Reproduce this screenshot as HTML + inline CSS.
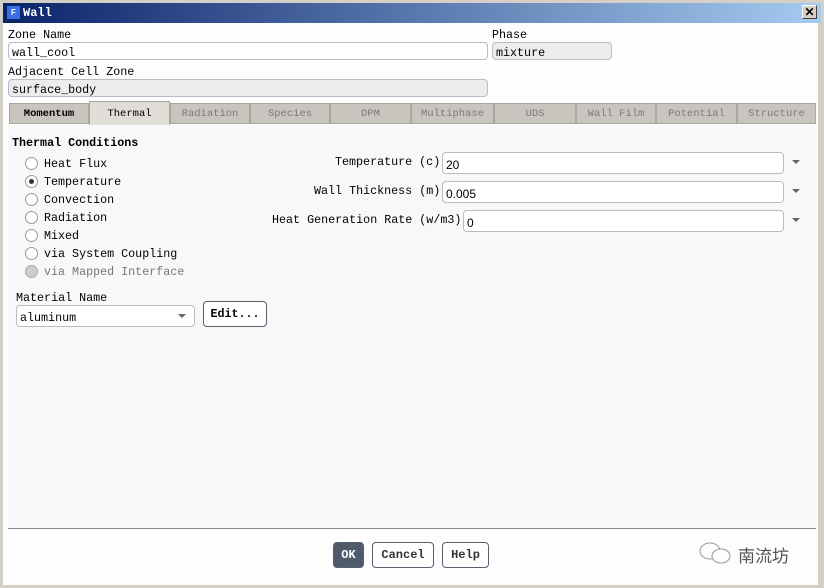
<!DOCTYPE html>
<html><head><style>
*{margin:0;padding:0;box-sizing:border-box}
body{width:824px;height:588px;background:#d4d0c8;font-family:"Liberation Mono","Noto Sans CJK SC",monospace;font-size:11.7px;color:#000;position:relative;overflow:hidden}
.a{position:absolute;white-space:nowrap}
.title{left:3px;top:3px;width:818px;height:20px;background:linear-gradient(90deg,#0a246a,#a6caf0)}
.win{left:3px;top:23px;width:815px;height:562px;background:#fdfdfd}
.inp{position:absolute;border:1px solid #b8bcc4;border-radius:4px;background:#fff;padding:2px 3px;line-height:14px;font-family:"Liberation Mono",monospace;font-size:11.7px}
.g{background:#ececec}
.tab{position:absolute;top:103px;height:21px;background:#c8c5bf;border:1px solid #aaa7a0;color:#7a7a7a;font-size:10.5px;text-align:center;line-height:21px}
.rad{position:absolute;left:25px;width:13px;height:13px;border:1px solid #9a9a9a;border-radius:50%;background:#fff}
.arr{position:absolute;left:792px;width:0;height:0;border-left:4px solid transparent;border-right:4px solid transparent;border-top:4px solid #666}
.btn{position:absolute;top:542px;height:26px;border:1px solid #56606e;border-radius:4px;font-weight:bold;font-size:12px;text-align:center;line-height:25px;color:#333}
</style></head><body>
<div class="a title"></div>
<div class="a" style="left:7px;top:6px;width:13px;height:13px;background:#3a6ee8;color:#fff;font-size:8px;font-weight:bold;text-align:center;line-height:13px;font-family:'Liberation Sans'">F</div>
<div class="a" style="left:23px;top:6px;color:#fff;font-weight:bold;font-size:12px">Wall</div>
<div class="a" style="left:802px;top:5px;width:15px;height:14px;background:#d4d0c8;border:1px solid #404040;border-top-color:#fff;border-left-color:#fff;text-align:center;line-height:12px;font-weight:bold;font-size:12px;font-family:'Liberation Sans'">✕</div>
<div class="a win"></div>
<div class="a" style="left:8px;top:28px">Zone Name</div>
<div class="inp" style="left:8px;top:42px;width:480px;height:18px;padding-top:3px">wall_cool</div>
<div class="a" style="left:492px;top:28px">Phase</div>
<div class="inp g" style="left:492px;top:42px;width:120px;height:18px;padding-top:3px">mixture</div>
<div class="a" style="left:8px;top:65px">Adjacent Cell Zone</div>
<div class="inp g" style="left:8px;top:79px;width:480px;height:18px;padding-top:3px">surface_body</div>
<div class="tab" style="left:9px;width:80px;color:#000;font-weight:bold">Momentum</div>
<div class="tab" style="left:89px;top:101px;height:24px;width:81px;background:#e0ddd7;color:#000;border-bottom:none;line-height:24px">Thermal</div>
<div class="tab" style="left:170px;width:80px">Radiation</div>
<div class="tab" style="left:250px;width:80px">Species</div>
<div class="tab" style="left:330px;width:81px">DPM</div>
<div class="tab" style="left:411px;width:83px">Multiphase</div>
<div class="tab" style="left:494px;width:82px">UDS</div>
<div class="tab" style="left:576px;width:80px">Wall Film</div>
<div class="tab" style="left:656px;width:81px">Potential</div>
<div class="tab" style="left:737px;width:79px">Structure</div>
<div class="a" style="left:8px;top:125px;width:808px;height:403px;background:#f8f8f8"></div>
<div class="a" style="left:8px;top:528px;width:808px;height:1px;background:#888"></div>
<div class="a" style="left:12px;top:136px;font-weight:bold">Thermal Conditions</div>
<div class="rad" style="top:157px"></div><div class="a" style="left:44px;top:157px">Heat Flux</div>
<div class="rad" style="top:175px"><div style="position:absolute;left:3px;top:3px;width:5px;height:5px;border-radius:50%;background:#333"></div></div><div class="a" style="left:44px;top:175px">Temperature</div>
<div class="rad" style="top:193px"></div><div class="a" style="left:44px;top:193px">Convection</div>
<div class="rad" style="top:211px"></div><div class="a" style="left:44px;top:211px">Radiation</div>
<div class="rad" style="top:229px"></div><div class="a" style="left:44px;top:229px">Mixed</div>
<div class="rad" style="top:247px"></div><div class="a" style="left:44px;top:247px">via System Coupling</div>
<div class="rad" style="top:265px;background:#d0cdc6;border-color:#aaa"></div><div class="a" style="left:44px;top:265px;color:#777">via Mapped Interface</div>
<div class="a" style="left:16px;top:291px">Material Name</div>
<div class="inp" style="left:16px;top:305px;width:179px;height:22px;padding-top:5px">aluminum</div>
<div class="arr" style="left:178px;top:314px"></div>
<div class="a" style="left:203px;top:301px;width:64px;height:26px;border:1px solid #56606e;border-radius:4px;font-weight:bold;line-height:24px;text-align:center;background:#fff">Edit...</div>
<div class="a" style="left:335px;top:155px">Temperature (c)</div>
<div class="inp" style="left:442px;top:152px;width:342px;height:22px;padding-top:5px;font-family:'Liberation Sans';font-size:12px">20</div>
<div class="arr" style="top:160px"></div>
<div class="a" style="left:314px;top:184px">Wall Thickness (m)</div>
<div class="inp" style="left:442px;top:181px;width:342px;height:22px;padding-top:5px;font-family:'Liberation Sans';font-size:12px">0.005</div>
<div class="arr" style="top:189px"></div>
<div class="a" style="left:272px;top:213px">Heat Generation Rate (w/m3)</div>
<div class="inp" style="left:463px;top:210px;width:321px;height:22px;padding-top:5px;font-family:'Liberation Sans';font-size:12px">0</div>
<div class="arr" style="top:218px"></div>
<div class="btn" style="left:333px;width:31px;background:#4f5b6b;color:#fff">OK</div>
<div class="btn" style="left:372px;width:62px;background:#fff">Cancel</div>
<div class="btn" style="left:442px;width:47px;background:#fff">Help</div>
<svg class="a" style="left:698px;top:541px" width="36" height="26"><ellipse cx="12" cy="10" rx="10" ry="8" fill="none" stroke="#999"/><ellipse cx="23" cy="15" rx="9" ry="7" fill="#fff" stroke="#999"/></svg>
<div class="a" style="left:738px;top:542px;font-family:'Noto Sans CJK SC',sans-serif;font-size:17px;color:#555">南流坊</div>
</body></html>
